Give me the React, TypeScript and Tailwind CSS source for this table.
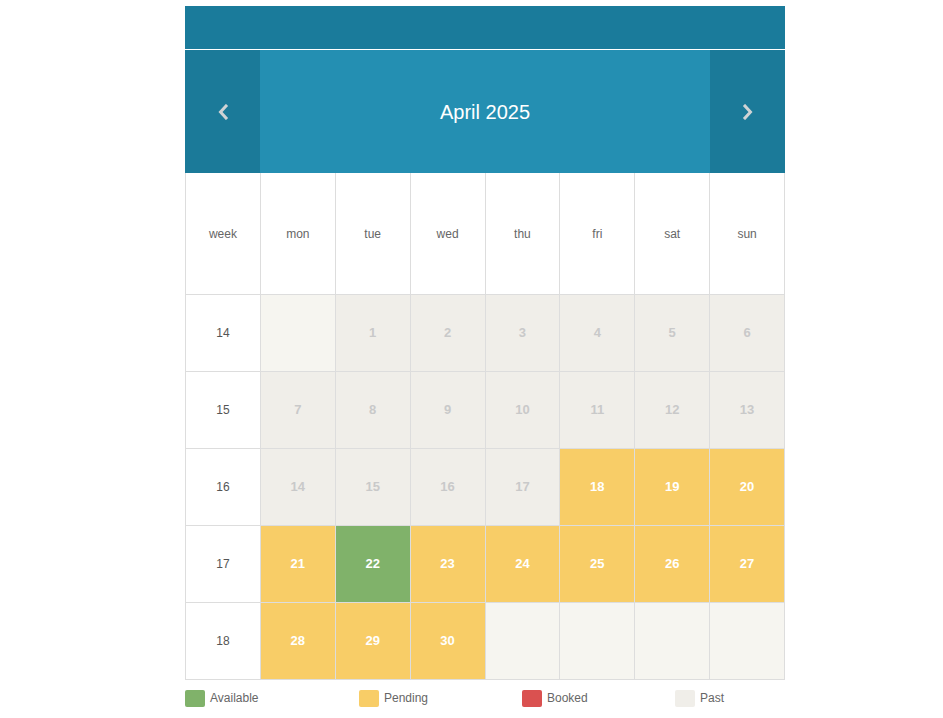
import React from "react";

type Cell = { d?: number; kind: "empty" | "past" | "pending" | "available" };

const weeks: { w: number; cells: Cell[] }[] = [
  {
    w: 14,
    cells: [
      { kind: "empty" },
      { d: 1, kind: "past" },
      { d: 2, kind: "past" },
      { d: 3, kind: "past" },
      { d: 4, kind: "past" },
      { d: 5, kind: "past" },
      { d: 6, kind: "past" },
    ],
  },
  {
    w: 15,
    cells: [7, 8, 9, 10, 11, 12, 13].map((d) => ({ d, kind: "past" as const })),
  },
  {
    w: 16,
    cells: [
      { d: 14, kind: "past" },
      { d: 15, kind: "past" },
      { d: 16, kind: "past" },
      { d: 17, kind: "past" },
      { d: 18, kind: "pending" },
      { d: 19, kind: "pending" },
      { d: 20, kind: "pending" },
    ],
  },
  {
    w: 17,
    cells: [
      { d: 21, kind: "pending" },
      { d: 22, kind: "available" },
      { d: 23, kind: "pending" },
      { d: 24, kind: "pending" },
      { d: 25, kind: "pending" },
      { d: 26, kind: "pending" },
      { d: 27, kind: "pending" },
    ],
  },
  {
    w: 18,
    cells: [
      { d: 28, kind: "pending" },
      { d: 29, kind: "pending" },
      { d: 30, kind: "pending" },
      { kind: "empty" },
      { kind: "empty" },
      { kind: "empty" },
      { kind: "empty" },
    ],
  },
];

const cellClass: Record<Cell["kind"], string> = {
  empty: "bg-[#f6f5f0]",
  past: "bg-[#f0eee9] text-[#c9c9c9]",
  pending: "bg-[#f8cd67] text-white",
  available: "bg-[#80b26a] text-white",
};

const days = ["week", "mon", "tue", "wed", "thu", "fri", "sat", "sun"];

export default function App() {
  return (
    <div
      className="w-[943px] h-[718px] bg-white pt-[6px]"
      style={{ fontFamily: '"Liberation Sans", Arial, sans-serif' }}
    >
      <div className="w-[600px] ml-[185px]">
        <div className="h-[43px] bg-[#1a7b9b]" />
        <div className="h-px bg-white" />
        <div className="flex h-[123px]">
          <div className="w-[75px] bg-[#1b7a99] flex items-center justify-center">
            <svg width="12" height="16" viewBox="0 0 12 16">
              <polyline
                points="9,2 3.5,8 9,14"
                fill="none"
                stroke="#cfd3d5"
                strokeWidth="3"
                strokeLinecap="square"
              />
            </svg>
          </div>
          <div className="flex-1 bg-[#248fb2] flex items-center justify-center text-white text-[20px]">
            April 2025
          </div>
          <div className="w-[75px] bg-[#1b7a99] flex items-center justify-center">
            <svg width="12" height="16" viewBox="0 0 12 16">
              <polyline
                points="3,2 8.5,8 3,14"
                fill="none"
                stroke="#cfd3d5"
                strokeWidth="3"
                strokeLinecap="square"
              />
            </svg>
          </div>
        </div>
        <div className="grid grid-cols-8 gap-px bg-[#dddddd] px-px pb-px">
          {days.map((d) => (
            <div
              key={d}
              className="h-[121px] bg-white flex items-center justify-center text-[12px] text-[#666]"
            >
              {d}
            </div>
          ))}
          {weeks.map((wk) => (
            <React.Fragment key={wk.w}>
              <div className="h-[76px] bg-white flex items-center justify-center text-[12px] text-[#555]">
                {wk.w}
              </div>
              {wk.cells.map((c, i) => (
                <div
                  key={i}
                  className={`h-[76px] flex items-center justify-center text-[13px] font-bold ${cellClass[c.kind]}`}
                >
                  {c.d ?? ""}
                </div>
              ))}
            </React.Fragment>
          ))}
        </div>
        <div className="flex mt-[9px] text-[12px] text-[#666]">
          <div className="w-[174px] flex items-center gap-[5px]">
            <span className="w-[20px] h-[17px] rounded-[2px] bg-[#80b26a]" />
            <span>Available</span>
          </div>
          <div className="w-[163px] flex items-center gap-[5px]">
            <span className="w-[20px] h-[17px] rounded-[2px] bg-[#f8cd67]" />
            <span>Pending</span>
          </div>
          <div className="w-[153px] flex items-center gap-[5px]">
            <span className="w-[20px] h-[17px] rounded-[2px] bg-[#da5150]" />
            <span>Booked</span>
          </div>
          <div className="flex items-center gap-[5px]">
            <span className="w-[20px] h-[17px] rounded-[2px] bg-[#f0eee9]" />
            <span>Past</span>
          </div>
        </div>
      </div>
    </div>
  );
}
